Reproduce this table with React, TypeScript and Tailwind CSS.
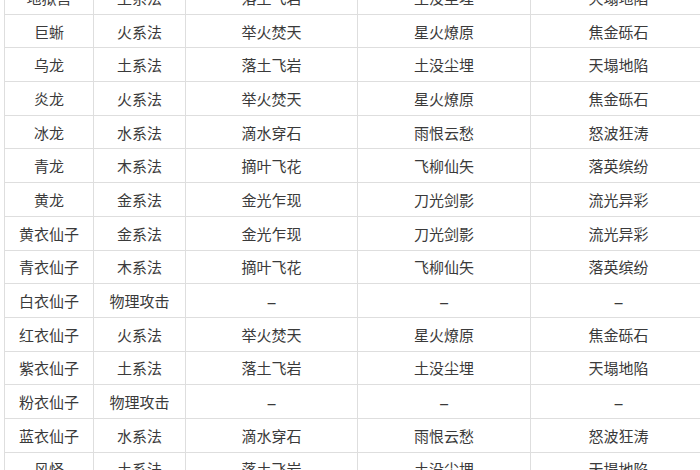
const rows: string[][] = [
  ["地狱兽", "土系法", "落土飞岩", "土没尘埋", "天塌地陷"],
  ["巨蜥", "火系法", "举火焚天", "星火燎原", "焦金砾石"],
  ["乌龙", "土系法", "落土飞岩", "土没尘埋", "天塌地陷"],
  ["炎龙", "火系法", "举火焚天", "星火燎原", "焦金砾石"],
  ["冰龙", "水系法", "滴水穿石", "雨恨云愁", "怒波狂涛"],
  ["青龙", "木系法", "摘叶飞花", "飞柳仙矢", "落英缤纷"],
  ["黄龙", "金系法", "金光乍现", "刀光剑影", "流光异彩"],
  ["黄衣仙子", "金系法", "金光乍现", "刀光剑影", "流光异彩"],
  ["青衣仙子", "木系法", "摘叶飞花", "飞柳仙矢", "落英缤纷"],
  ["白衣仙子", "物理攻击", "–", "–", "–"],
  ["红衣仙子", "火系法", "举火焚天", "星火燎原", "焦金砾石"],
  ["紫衣仙子", "土系法", "落土飞岩", "土没尘埋", "天塌地陷"],
  ["粉衣仙子", "物理攻击", "–", "–", "–"],
  ["蓝衣仙子", "水系法", "滴水穿石", "雨恨云愁", "怒波狂涛"],
  ["风怪", "土系法", "落土飞岩", "土没尘埋", "天塌地陷"],
]

const widths = ["w-[89px]", "w-[92px]", "w-[172px]", "w-[173px]", "w-[176px]"]

export default function App() {
  return (
    <div className="h-[470px] w-[700px] overflow-hidden bg-white">
      <table
        className="-mt-[20px] ml-[4px] w-[702px] table-fixed border-collapse text-center text-[15px] text-[#3a3a3a]"
        style={{ fontFamily: '"Noto Sans CJK SC", "Noto Sans", sans-serif' }}
      >
        <colgroup>
          {widths.map((w, i) => (
            <col key={i} className={w} />
          ))}
        </colgroup>
        <tbody>
          {rows.map((r, i) => (
            <tr key={i} className="h-[33.7px]">
              {r.map((c, j) => (
                <td
                  key={j}
                  className={
                    c === "–"
                      ? "border-[1.5px] border-[#dedede] p-0 text-[18px] leading-none"
                      : "border-[1.5px] border-[#dedede] p-0 leading-none"
                  }
                >
                  {c}
                </td>
              ))}
            </tr>
          ))}
        </tbody>
      </table>
    </div>
  )
}
